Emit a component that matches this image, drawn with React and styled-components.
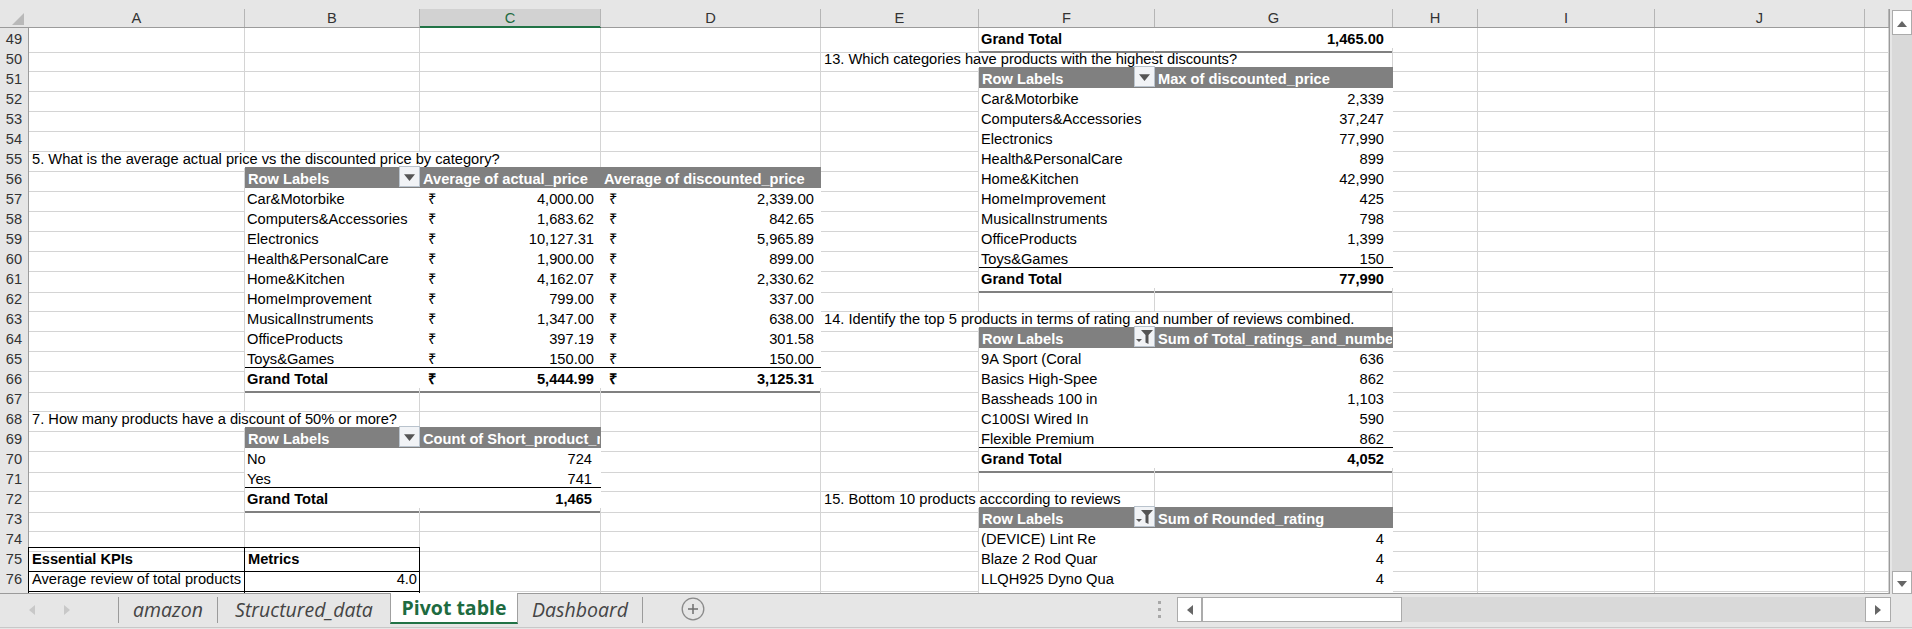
import React from "react";
import styled, { createGlobalStyle } from "styled-components";

const GlobalStyle = createGlobalStyle`
  html, body {
    margin: 0;
    padding: 0;
    background: #e6e6e6;
    overflow: hidden;
  }
`;

const COLS = ["A", "B", "C", "D", "E", "F", "G", "H", "I", "J", "K"];
const GRID = "29px 216px 175px 181px 220px 158px 176px 238px 85px 177px 210px 24px";
const LINE = "#d4d4d4";
const GREY = "#808080";

const Frame = styled.div`
  width: 1912px;
  height: 629px;
  display: flex;
  flex-direction: column;
  background: #e6e6e6;
  font-family: "Liberation Sans", Arial, sans-serif;
  font-size: 14.67px;
  color: #000;
  overflow: hidden;
`;
const Main = styled.div`
  height: 594px;
  padding-top: 9px;
  box-sizing: border-box;
  display: flex;
  gap: 2px;
`;
const Sheet = styled.div`
  width: 1890px;
  overflow: hidden;
  border-right: 1px solid #9b9b9b;
  border-bottom: 1px solid #9b9b9b;
  box-sizing: border-box;
  background: #fff;
`;
const HeaderRow = styled.div`
  display: grid;
  grid-template-columns: ${GRID};
  height: 19px;
  background: #e6e6e6;
  border-bottom: 1px solid #9b9b9b;
  box-sizing: border-box;
`;
const Corner = styled.div`
  display: flex;
  justify-content: flex-end;
  align-items: flex-end;
  padding: 0 5px 2px 0;
  box-sizing: border-box;
`;
const ColHead = styled.div`
  display: flex;
  align-items: center;
  justify-content: center;
  border-right: 1px solid #b5b5b5;
  line-height: 18px;
  color: ${(p) => (p.$active ? "#1e6b41" : "#333")};
  background: ${(p) => (p.$active ? "#d2d2d2" : "transparent")};
  box-shadow: ${(p) => (p.$active ? "0 1px 0 #217346, inset 0 -1px 0 #217346" : "none")};
`;
const Row = styled.div`
  display: grid;
  grid-template-columns: ${GRID};
  height: 20px;
`;
const RowHead = styled.div`
  background: #e6e6e6;
  border-bottom: 1px solid #c6c6c6;
  border-right: 1px solid #9b9b9b;
  box-sizing: border-box;
  text-align: center;
  color: #333;
  line-height: 23px;
  overflow: hidden;
`;
const Cell = styled.div`
  position: relative;
  box-sizing: border-box;
  white-space: nowrap;
  line-height: 23px;
  padding: 0 ${(p) => p.$right ?? 2}px 0 2px;
  text-align: ${(p) => (p.$num ? "right" : "left")};
  grid-column: span ${(p) => p.$span ?? 1};
  overflow: ${(p) => (p.$clip ? "hidden" : "visible")};
  border-right: 1px solid ${LINE};
  border-bottom: 1px solid ${LINE};
`;
const PlainCell = styled(Cell)`
  padding-left: 3px;
`;
const PivotCell = styled(Cell)`
  background: #fff;
  border-color: #fff;
`;
const MoneyCell = styled(PivotCell)`
  display: flex;
  justify-content: space-between;
  padding-left: 8px;
`;
const HeadCell = styled(Cell)`
  background: ${GREY};
  border-color: ${GREY};
  color: #fff;
  font-weight: 700;
  padding-left: 3px;
  box-shadow: 0 -1px 0 ${GREY};
`;
const TotalCell = styled(Cell)`
  background: #fff;
  font-weight: 700;
  border-right-color: #fff;
  border-bottom: 2px solid ${GREY};
  box-shadow: ${(p) => (p.$noTop ? "none" : "0 -1px 0 #000")};
`;
const TotalMoney = styled(TotalCell)`
  display: flex;
  justify-content: space-between;
  padding-left: 8px;
`;
const KpiCell = styled(Cell)`
  border-right: 1px solid #000;
  border-bottom: 1px solid #000;
  border-left: 1px solid #000;
  box-shadow: ${(p) => (p.$top ? "0 -1px 0 #000" : "none")};
  margin-left: -1px;
  padding-left: 3px;
  font-weight: ${(p) => (p.$bold ? 700 : 400)};
`;
const FilterBtn = styled.span`
  position: absolute;
  z-index: 1;
  right: -1px;
  top: -2px;
  width: 21px;
  height: 21px;
  box-sizing: border-box;
  border: 1px solid #b9c3cd;
  background: #f1f3f6;
  display: flex;
  align-items: center;
  justify-content: center;
`;
const VScroll = styled.div`
  width: 20px;
  margin-top: 1px;
  display: flex;
  flex-direction: column;
  background: #d9d9d9;
`;
const ScrollBtn = styled.div`
  width: 20px;
  height: ${(p) => p.$h}px;
  box-sizing: border-box;
  background: #fff;
  border: 1px solid #ababab;
  display: flex;
  align-items: center;
  justify-content: center;
`;
const Track = styled.div`
  flex: 1;
`;
const TabBar = styled.div`
  height: 33px;
  display: flex;
  align-items: flex-start;
  background: #e6e6e6;
  border-bottom: 1px solid #c8c8c8;
`;
const Arrows = styled.div`
  width: 118px;
  height: 31px;
  display: flex;
  gap: 25px;
  padding-left: 27px;
  box-sizing: border-box;
  align-items: center;
`;
const Tab = styled.div`
  width: ${(p) => p.$w}px;
  box-sizing: border-box;
  text-align: center;
  font-family: "Open Sans", "Liberation Sans", sans-serif;
  font-size: 19.5px;
  white-space: nowrap;
  font-style: ${(p) => (p.$active ? "normal" : "italic")};
  font-weight: ${(p) => (p.$active ? 700 : 400)};
  color: ${(p) => (p.$active ? "#1e6b41" : "#444")};
  background: ${(p) => (p.$active ? "#fff" : "transparent")};
  border-left: ${(p) => (p.$afterActive ? "none" : `1px solid ${p.$active ? "#a0a0a0" : "#9b9b9b"}`)};
  border-right: ${(p) => (p.$active ? "1px solid #a0a0a0" : "none")};
  border-bottom: ${(p) => (p.$active ? "2px solid #217346" : "none")};
  margin-top: ${(p) => (p.$active ? "-1px" : "3px")};
  height: ${(p) => (p.$active ? "31px" : "26px")};
  line-height: ${(p) => (p.$active ? "30px" : "25px")};
`;
const TabEnd = styled.div`
  width: 1px;
  height: 26px;
  margin-top: 3px;
  background: #9b9b9b;
`;
const PlusWrap = styled.div`
  margin: 3px 0 0 38px;
  width: 24px;
  height: 24px;
`;
const HScrollArea = styled.div`
  margin-left: auto;
  display: flex;
  align-items: center;
  gap: 16px;
  padding: 3px 21px 0 0;
`;
const Dots = styled.div`
  width: 3px;
  height: 17px;
  background: repeating-linear-gradient(#a8a8a8 0 3px, transparent 3px 7px);
`;
const HScroll = styled.div`
  width: 714px;
  height: 25px;
  display: flex;
  background: #d9d9d9;
`;
const HBtn = styled.div`
  width: ${(p) => p.$w}px;
  box-sizing: border-box;
  background: #fff;
  border: 1px solid #ababab;
  display: flex;
  align-items: center;
  justify-content: center;
`;
const HGap = styled.div`
  flex: 1;
`;

function Triangle({ dir, color = "#666", size = 10 }) {
  const points = {
    up: "0,9 10,9 5,3",
    down: "0,3 10,3 5,9",
    left: "8,0 8,10 2,5",
    right: "2,0 2,10 8,5",
  }[dir];
  return (
    <svg width={size} height={size} viewBox="0 0 10 10">
      <polygon points={points} fill={color} />
    </svg>
  );
}

function Funnel() {
  return (
    <svg width="19" height="19" viewBox="0 0 19 19">
      <path d="M6 3h12l-4.5 5v9l-3-1.5V8z" fill="#555" />
      <path d="M1 12h6l-3 3z" fill="#555" />
    </svg>
  );
}

function Plus() {
  return (
    <svg width="24" height="24" viewBox="0 0 24 24">
      <circle cx="12" cy="12" r="10.8" fill="none" stroke="#8a8a8a" strokeWidth="1.3" />
      <path d="M12 7v10M7 12h10" stroke="#6f6f6f" strokeWidth="1.5" />
    </svg>
  );
}

// every filled cell of the sheet, row -> column -> cell
const cells = {};
const put = (row, col, cell) => {
  cells[row] = { ...(cells[row] || {}), [col]: cell };
};

const pivot = (start, col, next, head, filter, lines, total, right = 8) => {
  put(start, col, { kind: "head", text: "Row Labels", filter });
  put(start, next, { kind: "head", text: head, clip: true });
  lines.forEach(([name, value], i) => {
    put(start + i + 1, col, { kind: "pivot", text: name });
    put(start + i + 1, next, { kind: "pivot", text: value, num: true, right });
  });
  if (!total) return;
  const end = start + lines.length + 1;
  put(end, col, { kind: "total", text: "Grand Total" });
  put(end, next, { kind: "total", text: total, num: true, right });
};

put(49, "F", { kind: "total", text: "Grand Total", noTop: true });
put(49, "G", { kind: "total", text: "1,465.00", num: true, right: 8, noTop: true });
put(50, "E", { kind: "plain", text: "13. Which categories have products with the highest discounts?", span: 3 });
pivot(51, "F", "G", "Max of discounted_price", "down", [
  ["Car&Motorbike", "2,339"],
  ["Computers&Accessories", "37,247"],
  ["Electronics", "77,990"],
  ["Health&PersonalCare", "899"],
  ["Home&Kitchen", "42,990"],
  ["HomeImprovement", "425"],
  ["MusicalInstruments", "798"],
  ["OfficeProducts", "1,399"],
  ["Toys&Games", "150"],
], "77,990");

put(55, "A", { kind: "plain", text: "5. What is the average actual price vs the discounted price by category?", span: 3 });
put(56, "B", { kind: "head", text: "Row Labels", filter: "down" });
put(56, "C", { kind: "head", text: "Average of actual_price", clip: true });
put(56, "D", { kind: "head", text: "Average of discounted_price", clip: true });
[
  ["Car&Motorbike", "4,000.00", "2,339.00"],
  ["Computers&Accessories", "1,683.62", "842.65"],
  ["Electronics", "10,127.31", "5,965.89"],
  ["Health&PersonalCare", "1,900.00", "899.00"],
  ["Home&Kitchen", "4,162.07", "2,330.62"],
  ["HomeImprovement", "799.00", "337.00"],
  ["MusicalInstruments", "1,347.00", "638.00"],
  ["OfficeProducts", "397.19", "301.58"],
  ["Toys&Games", "150.00", "150.00"],
].forEach(([name, actual, discounted], i) => {
  put(57 + i, "B", { kind: "pivot", text: name });
  put(57 + i, "C", { kind: "money", text: actual });
  put(57 + i, "D", { kind: "money", text: discounted });
});
put(66, "B", { kind: "total", text: "Grand Total" });
put(66, "C", { kind: "totalMoney", text: "5,444.99" });
put(66, "D", { kind: "totalMoney", text: "3,125.31" });

put(63, "E", { kind: "plain", text: "14. Identify the top 5 products in terms of rating and number of reviews combined.", span: 3 });
pivot(64, "F", "G", "Sum of Total_ratings_and_number_of_reviews", "funnel", [
  ["9A Sport (Coral", "636"],
  ["Basics High-Spee", "862"],
  ["Bassheads 100 in", "1,103"],
  ["C100SI Wired In", "590"],
  ["Flexible Premium", "862"],
], "4,052");

put(68, "A", { kind: "plain", text: "7. How many products have a discount of 50% or more?", span: 2 });
pivot(69, "B", "C", "Count of Short_product_name", "down", [
  ["No", "724"],
  ["Yes", "741"],
], "1,465");

put(72, "E", { kind: "plain", text: "15. Bottom 10 products acccording to reviews", span: 2 });
pivot(73, "F", "G", "Sum of Rounded_rating", "funnel", [
  ["(DEVICE) Lint Re", "4"],
  ["Blaze 2 Rod Quar", "4"],
  ["LLQH925 Dyno Qua", "4"],
]);
put(77, "F", { kind: "pivot" });
put(77, "G", { kind: "pivot" });

put(75, "A", { kind: "kpi", text: "Essential KPIs", bold: true, top: true });
put(75, "B", { kind: "kpi", text: "Metrics", bold: true, top: true });
put(76, "A", { kind: "kpi", text: "Average review of total products" });
put(76, "B", { kind: "kpi", text: "4.0", num: true, right: 2 });
put(77, "A", { kind: "kpi" });
put(77, "B", { kind: "kpi" });

const KINDS = {
  plain: PlainCell,
  pivot: PivotCell,
  money: MoneyCell,
  head: HeadCell,
  total: TotalCell,
  totalMoney: TotalMoney,
  kpi: KpiCell,
};

function SheetCell({ cell }) {
  const Kind = KINDS[cell.kind];
  const isMoney = cell.kind === "money" || cell.kind === "totalMoney";
  return (
    <Kind
      $span={cell.span}
      $num={cell.num}
      $right={isMoney ? 6 : cell.right}
      $clip={cell.clip}
      $bold={cell.bold}
      $top={cell.top}
      $noTop={cell.noTop}
    >
      {isMoney && <span>₹</span>}
      {isMoney ? <span>{cell.text}</span> : cell.text}
      {cell.filter && (
        <FilterBtn>
          {cell.filter === "funnel" ? <Funnel /> : <Triangle dir="down" size={11} color="#555" />}
        </FilterBtn>
      )}
    </Kind>
  );
}

function SheetRow({ n }) {
  const filled = cells[n] || {};
  const out = [];
  let skip = 0;
  COLS.forEach((col) => {
    if (skip > 0) {
      skip -= 1;
      return;
    }
    const cell = filled[col];
    if (cell) {
      skip = (cell.span || 1) - 1;
      out.push(<SheetCell key={col} cell={cell} />);
    } else {
      out.push(<Cell key={col} />);
    }
  });
  return (
    <Row>
      <RowHead>{n < 77 ? n : ""}</RowHead>
      {out}
    </Row>
  );
}

const rowNumbers = Array.from({ length: 29 }, (_, i) => 49 + i);

export default function App() {
  return (
    <Frame>
      <GlobalStyle />
      <Main>
        <Sheet>
          <HeaderRow>
            <Corner>
              <svg width="12" height="12" viewBox="0 0 12 12">
                <polygon points="12,0 12,12 0,12" fill="#b9b9b9" />
              </svg>
            </Corner>
            {COLS.map((c) => (
              <ColHead key={c} $active={c === "C"}>
                {c === "K" ? "" : c}
              </ColHead>
            ))}
          </HeaderRow>
          {rowNumbers.map((n) => (
            <SheetRow key={n} n={n} />
          ))}
        </Sheet>
        <VScroll>
          <ScrollBtn $h={25}>
            <Triangle dir="up" />
          </ScrollBtn>
          <Track />
          <ScrollBtn $h={23}>
            <Triangle dir="down" />
          </ScrollBtn>
        </VScroll>
      </Main>
      <TabBar>
        <Arrows>
          <Triangle dir="left" color="#c8c8c8" />
          <Triangle dir="right" color="#c8c8c8" />
        </Arrows>
        <Tab $w={99}>amazon</Tab>
        <Tab $w={173}>Structured_data</Tab>
        <Tab $active $w={128}>Pivot table</Tab>
        <Tab $w={124} $afterActive>Dashboard</Tab>
        <TabEnd />
        <PlusWrap>
          <Plus />
        </PlusWrap>
        <HScrollArea>
          <Dots />
          <HScroll>
            <HBtn $w={25}>
              <Triangle dir="left" color="#666" />
            </HBtn>
            <HBtn $w={200} />
            <HGap />
            <HBtn $w={26}>
              <Triangle dir="right" color="#666" />
            </HBtn>
          </HScroll>
        </HScrollArea>
      </TabBar>
    </Frame>
  );
}
